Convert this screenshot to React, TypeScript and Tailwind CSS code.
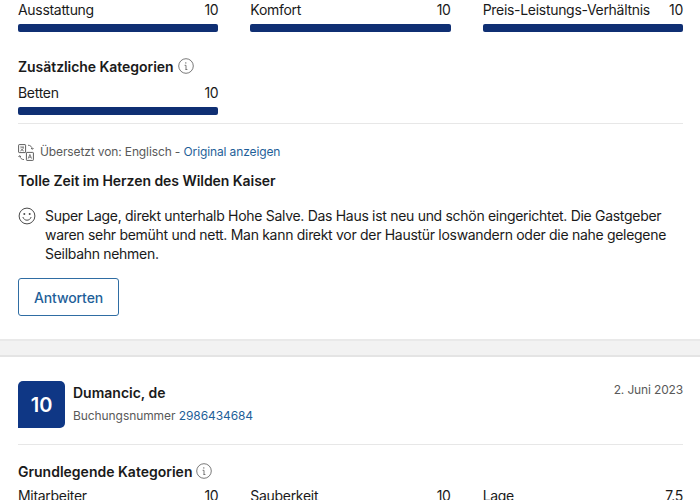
function Info() {
  return (
    <svg width="16" height="16" viewBox="0 0 16 16" fill="none" stroke="#6b6b6b" strokeWidth="0.9" className="shrink-0">
      <circle cx="8" cy="8" r="7.3" />
      <circle cx="7.8" cy="4.9" r="0.7" fill="#6b6b6b" stroke="none" />
      <path d="M7 7.3h1v4.2M8 11.5h1" strokeLinecap="round" />
    </svg>
  );
}

function Translate() {
  return (
    <svg width="16" height="17" viewBox="0 0 16 17" fill="none" stroke="#5f5f5f" strokeWidth="1" className="shrink-0">
      <rect x="0.6" y="0.6" width="7" height="8" rx="0.6" />
      <rect x="8.4" y="8.4" width="7" height="8" rx="0.6" />
      <path d="M2.2 3h3.8M4.1 3v1M5.6 3.4C5.2 5 4 6.3 2.3 7M3 4.6c.5 1 1.4 1.9 2.8 2.4" strokeWidth="0.8" />
      <path d="M10.2 14.6l1.7-4.2 1.7 4.2M10.8 13.2h2.2" strokeWidth="0.8" />
      <path d="M10 1.2c2.5.1 4 1.5 4.3 4M13 4l1.3 1.3L15.6 4" strokeWidth="0.9" />
      <path d="M6 15.6c-2.5-.1-4-1.5-4.3-4M3 13l-1.3-1.3L.4 13" strokeWidth="0.9" />
    </svg>
  );
}

function Smile() {
  return (
    <svg width="18" height="18" viewBox="0 0 18 18" fill="none" stroke="#4a4a4a" strokeWidth="1" className="shrink-0">
      <circle cx="9" cy="9" r="7.9" />
      <circle cx="6.3" cy="7" r="1" fill="#4a4a4a" stroke="none" />
      <circle cx="11.7" cy="7" r="1" fill="#4a4a4a" stroke="none" />
      <path d="M5 10.4c.8 1.9 2.2 2.8 4 2.8s3.2-.9 4-2.8" strokeLinecap="round" />
    </svg>
  );
}

function Score({ label, value }: { label: string; value: string }) {
  return (
    <div className="flex flex-col">
      <div className="flex justify-between text-[14px] leading-[20px] tracking-[-0.3px] text-[#1a1a1a]">
        <span>{label}</span>
        <span>{value}</span>
      </div>
      <div className="mt-1 h-2 rounded-[2px] bg-[#0f2f73]" />
    </div>
  );
}

export default function App() {
  return (
    <div className="h-[500px] w-[700px] overflow-hidden bg-white font-['Inter',sans-serif] text-[#1a1a1a]">
      <section className="h-[339px] pl-[18px] pr-[17px]">
        <div className="grid grid-cols-3 gap-x-8">
          <Score label="Ausstattung" value="10" />
          <Score label="Komfort" value="10" />
          <Score label="Preis-Leistungs-Verhältnis" value="10" />
        </div>
        <div className="mt-[24px] flex h-[20px] items-center gap-1 text-[14px] font-semibold tracking-[-0.05px]">
          Zusätzliche Kategorien <Info />
        </div>
        <div className="mt-[7px] grid grid-cols-3 gap-x-8">
          <Score label="Betten" value="10" />
        </div>
        <div className="mt-[8px] h-px bg-[#e7e7e7]" />
        <div className="mt-[18px] flex h-[20px] items-center gap-[6px] text-[12px] tracking-[-0.12px] text-[#595959]">
          <Translate />
          <span>
            Übersetzt von: Englisch - <span className="text-[#1f5f99]">Original anzeigen</span>
          </span>
        </div>
        <h3 className="mt-[9px] text-[14px] font-semibold leading-[20px] tracking-[-0.05px]">Tolle Zeit im Herzen des Wilden Kaiser</h3>
        <div className="mt-[15px] flex gap-[9px]">
          <div className="pt-px"><Smile /></div>
          <p className="text-[14px] leading-[19px] tracking-[-0.3px] text-[#1a1a1a]">
            Super Lage, direkt unterhalb Hohe Salve. Das Haus ist neu und schön eingerichtet. Die Gastgeber waren sehr bemüht und nett. Man kann direkt vor der Haustür loswandern oder die nahe gelegene Seilbahn nehmen.
          </p>
        </div>
        <button className="mt-[15px] h-[38px] w-[101px] rounded-[3px] border border-[#2f6da3] text-[14px] font-medium tracking-[-0.1px] text-[#1f5f99]">
          Antworten
        </button>
      </section>
      <div className="h-[18px] border-y-2 border-y-[#e9e9e9] border-b-[#e4e4e4] bg-[#f2f2f2]" />
      <section className="pl-[18px] pr-[17px]">
        <div className="flex h-[88px] items-start border-b border-[#e7e7e7] pt-[24px]">
          <div className="flex h-[47px] w-[47px] items-center justify-center rounded-[5px] rounded-bl-none bg-[#0f3785] text-[20px] font-semibold text-white">
            10
          </div>
          <div className="ml-[8px] flex flex-col">
            <span className="mt-[2px] text-[14px] font-semibold leading-[20px]">Dumancic, de</span>
            <span className="mt-[3px] text-[12px] leading-[20px] tracking-[-0.08px] text-[#595959]">
              Buchungsnummer <span className="text-[#1f5f99]">2986434684</span>
            </span>
          </div>
          <span className="ml-auto mt-[-1px] text-[12px] leading-[20px] tracking-[-0.15px] text-[#595959]">2. Juni 2023</span>
        </div>
        <div className="mt-[16px] flex h-[20px] items-center gap-1 text-[14px] font-semibold">
          Grundlegende Kategorien <Info />
        </div>
        <div className="mt-[5px] grid grid-cols-3 gap-x-8">
          <Score label="Mitarbeiter" value="10" />
          <Score label="Sauberkeit" value="10" />
          <Score label="Lage" value="7.5" />
        </div>
      </section>
    </div>
  );
}
